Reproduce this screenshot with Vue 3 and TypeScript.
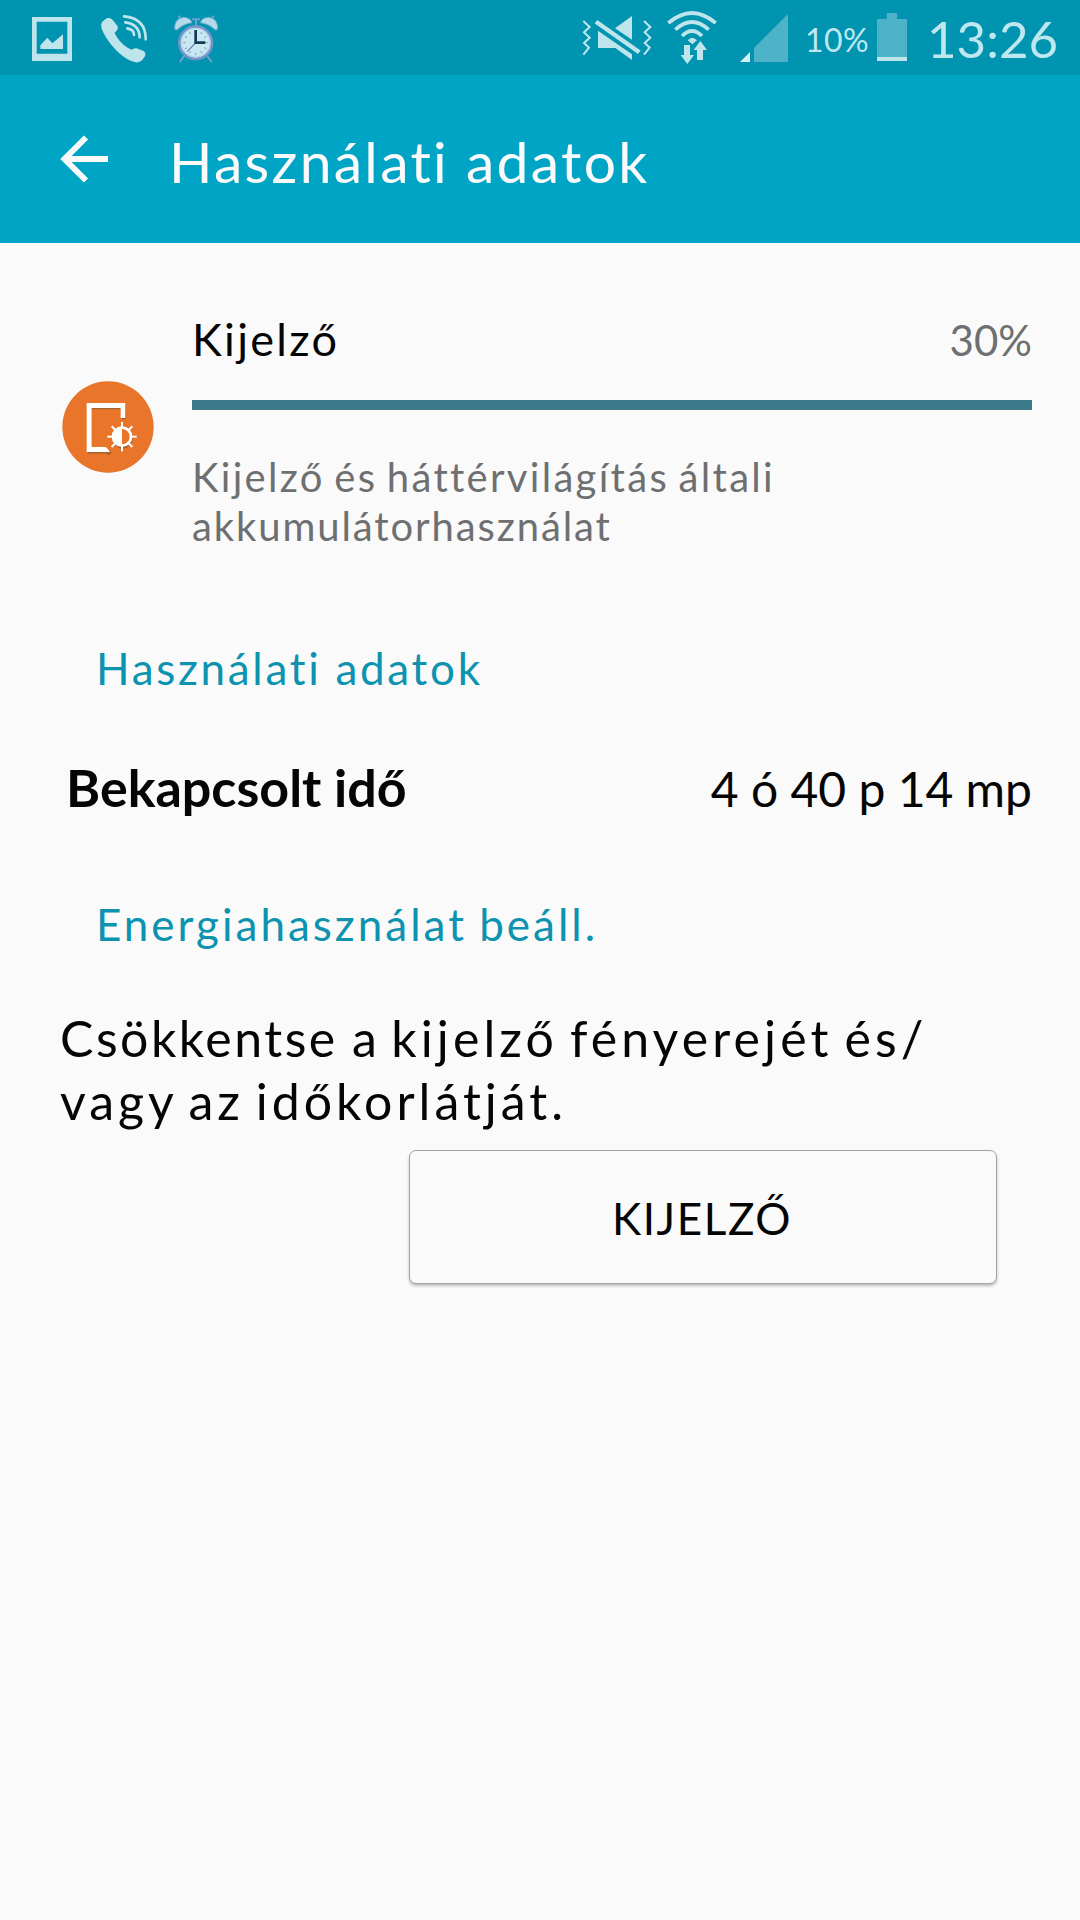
<script setup lang="ts">
interface Entry {
  label: string
  value: string
}

const title = 'Használati adatok'
const usage = { name: 'Kijelző', percent: '30%' }
const details: Entry[] = [{ label: 'Bekapcsolt idő', value: '4 ó 40 p 14 mp' }]
const ticks = Array.from({ length: 12 }, (_, i) => i * 30)
const rays = Array.from({ length: 8 }, (_, i) => i * 45)
</script>

<template>
  <div class="screen">
    <div class="status">
      <svg class="picture" viewBox="96 0 120 225" width="40" height="75">
        <path class="lit" fill-rule="evenodd" d="M96 51H216V183H96ZM110 65V161H202V65Z" />
        <path class="lit" d="M121 147V136L142 113L157 130L189 103V147Z" />
      </svg>
      <svg class="phone" viewBox="300 0 144 225" width="48" height="75">
        <path class="lit" d="M306 66L320 55Q331 51 338 60L352 77Q356 86 349 93L344 99Q355 125 384 144L395 149Q402 143 410 145L431 153Q439 159 435 169L426 181Q418 189 407 187Q382 182 353 155Q327 131 311 100Q299 79 306 66Z" />
        <g class="line" stroke-width="8" stroke-linecap="round">
          <path d="M372 49Q438 55 437 118" />
          <path d="M376 67Q418 72 419 112" />
          <path d="M382 85Q402 88 402 105" />
        </g>
      </svg>
      <svg class="alarm" viewBox="519 0 138 225" width="46" height="75">
        <g stroke="#6fa0cc" stroke-width="6" stroke-linecap="round">
          <path d="M551 170L541 184M623 170L634 184M588 60V74M579 58H597" />
          <path d="M537 49L542 58M640 49L635 58" />
        </g>
        <path fill="#b4daea" stroke="#6fa9d0" stroke-width="3" d="M524 88Q522 56 551 52Q571 53 576 68Q548 72 531 90Z" />
        <path fill="#b4daea" stroke="#6fa9d0" stroke-width="3" d="M653 88Q655 56 626 52Q606 53 601 68Q629 72 646 90Z" />
        <circle cx="587" cy="128" r="49" fill="#c8e7f1" stroke="#7394c9" stroke-width="8" />
        <circle cx="587" cy="128" r="43" fill="#c8e7f1" stroke="#aed4e8" stroke-width="3" />
        <path v-for="a in ticks" :key="a" d="M587 91V98" stroke="#6b98ba" stroke-width="2.5" :transform="`rotate(${a} 587 128)`" />
        <path d="M587 128L562 155" stroke="#6684bd" stroke-width="4" />
        <path d="M587 90V128H616" fill="none" stroke="#123a50" stroke-width="8" />
      </svg>
      <svg class="mute" viewBox="66 0 210 225" width="70" height="75">
        <g class="line" stroke-width="6">
          <path d="M70 63L89 81L72 97L89 113L72 129L87 143L70 164" />
          <path d="M252 63L271 81L254 97L271 113L254 129L269 143L252 164" />
          <path d="M108 65L238 157" stroke-width="13" />
        </g>
        <path class="lit" d="M165 85L216 48V119ZM114 92L216 163V180L166 144H114Z" />
      </svg>
      <svg class="wifi" viewBox="321 0 150 225" width="50" height="75">
        <g class="line" stroke-width="11">
          <path d="M325 69Q396 9 467 69" />
          <path d="M346 89Q396 43 446 89" />
          <path d="M366 108Q396 78 426 108" />
        </g>
        <path class="lit" d="M383 121Q397 106 411 121L397 133Z" />
        <path class="lit" d="M372 135H390V165H402L382 192L362 165H372ZM411 180V150H401L421 123L441 150H429V180Z" />
      </svg>
      <svg class="signal" viewBox="540 0 144 225" width="48" height="75">
        <path class="dim" d="M582 186V144L684 42V186Z" />
        <path fill="#d5f0f6" d="M540 186L570 156V186Z" />
      </svg>
      <span class="percent">10%</span>
      <svg class="battery" viewBox="231 0 90 225" width="30" height="75">
        <path class="dim" d="M260 39H291V57H321V171H231V57H260Z" />
        <path class="lit" d="M231 171H321V183H231Z" />
      </svg>
      <span class="time">13:26</span>
    </div>

    <header class="bar">
      <svg class="back" viewBox="0 0 48 48" width="48" height="48">
        <path d="M26 2.500L4.500 24L26 45.500M4 24H48" fill="none" stroke="#fafafa" stroke-width="6" />
      </svg>
      <h1>{{ title }}</h1>
    </header>

    <main>
      <section class="usage">
        <svg class="app" viewBox="67 240 276 276" width="92" height="92">
          <circle cx="205" cy="378" r="137" fill="#e87529" />
          <g fill="none" stroke="#a9602f" stroke-width="13" transform="translate(2 5)">
            <path d="M250 350V313H148V446H200L210 453" />
            <circle cx="247" cy="407" r="26" stroke-width="9" />
          </g>
          <path d="M257 351H243V321H156V438H198Q205 443 211 453H141V306H257Z" fill="#fff" />
          <circle cx="247" cy="407" r="27" fill="#e87529" stroke="#fff" stroke-width="8" />
          <path d="M247 380A27 27 0 0 0 247 434Z" fill="#fff" />
          <path v-for="a in rays" :key="a" d="M247 363V380" stroke="#fff" stroke-width="6" :transform="`rotate(${a} 247 407)`" />
        </svg>
        <div class="info">
          <div class="head">
            <span class="name">{{ usage.name }}</span>
            <span class="share">{{ usage.percent }}</span>
          </div>
          <div class="meter"></div>
          <p class="summary">Kijelző és háttérvilágítás általi<br /><span class="last">akkumulátorhasználat</span></p>
        </div>
      </section>

      <h2>Használati adatok</h2>
      <div v-for="d in details" :key="d.label" class="detail">
        <strong>{{ d.label }}</strong>
        <span>{{ d.value }}</span>
      </div>

      <h2 class="power">Energiahasználat beáll.</h2>
      <p class="hint"><span class="opening">Csökkentse a</span> kijelző fényerejét és/<br /><span class="last">vagy az időkorlátját.</span></p>
      <button type="button">KIJELZŐ</button>
    </main>
  </div>
</template>

<style>
body {
  background: #fafafa;
}
</style>

<style scoped>
.screen {
  width: 1080px;
  height: 1920px;
  overflow: hidden;
  background: #fafafa;
  color: #050505;
  font-family: "Choco Cooky", "Lato", sans-serif;
}
svg {
  display: block;
  flex: none;
}
h1,
h2,
p {
  margin: 0;
  font-weight: 400;
  white-space: nowrap;
}
.status {
  display: flex;
  height: 75px;
  padding-left: 32px;
  background: #0094b1;
  color: #bfe7f0;
  line-height: 75px;
}
.lit {
  fill: #bfe5ec;
}
.dim {
  fill: #4db3c9;
}
.line {
  fill: none;
  stroke: #bfe5ec;
}
.phone {
  margin-left: 28px;
}
.alarm {
  margin-left: 25px;
}
.mute {
  margin-left: 363px;
}
.wifi {
  margin-left: 15px;
}
.signal {
  margin-left: 23px;
}
.percent {
  width: 72px;
  margin-left: 17px;
  padding-top: 2px;
  font-size: 32px;
  letter-spacing: 0.5px;
}
.time {
  margin-left: 20px;
  padding-top: 1px;
  font-size: 51px;
}
.bar {
  display: flex;
  align-items: center;
  height: 168px;
  padding-left: 60px;
  background: #00a5c6;
  color: #fafafa;
}
h1 {
  margin-left: 61px;
  padding-top: 4px;
  font-size: 57px;
  line-height: 80px;
  letter-spacing: 2.3px;
}
main {
  padding-top: 66px;
}
.usage {
  display: flex;
  align-items: center;
  padding: 0 48px 0 62px;
}
.app {
  margin-bottom: 7px;
}
.info {
  flex: 1;
  margin-left: 38px;
}
.head {
  display: flex;
  justify-content: space-between;
  font-size: 45px;
  line-height: 60px;
}
.name {
  letter-spacing: 2.3px;
}
.share {
  padding-top: 1px;
  height: 59px;
  color: #6e6f70;
  font-size: 42px;
}
.meter {
  height: 10px;
  margin: 31px 0 43px;
  background: #3d7a89;
}
.summary {
  color: #6e6f70;
  font-size: 40px;
  line-height: 49px;
  letter-spacing: 2.3px;
  word-spacing: -3px;
}
.summary .last {
  letter-spacing: 1.9px;
}
h2 {
  margin: 87px 0 0 96px;
  color: #0d93b0;
  font-size: 44px;
  line-height: 60px;
  letter-spacing: 2.7px;
}
.detail {
  display: flex;
  align-items: baseline;
  justify-content: space-between;
  margin-top: 54px;
  padding: 0 48px 0 66px;
  font-size: 48px;
  line-height: 70px;
}
.detail strong {
  font-size: 52px;
  font-weight: 700;
}
.power {
  margin-top: 70px;
  letter-spacing: 3px;
  word-spacing: -2px;
}
.hint {
  margin: 53px 0 0 60px;
  font-size: 50px;
  line-height: 63px;
  letter-spacing: 4.1px;
  word-spacing: -5px;
}
.hint .opening {
  letter-spacing: 2.5px;
  word-spacing: -1px;
}
.hint .last {
  letter-spacing: 4px;
}
button {
  display: block;
  width: 588px;
  height: 134px;
  margin: 17px 0 0 409px;
  padding: 2px 2px 0 0;
  border: 1px solid #a3a3a3;
  border-radius: 7px;
  background: #fafafa;
  box-shadow: 0 2px 3px rgba(0, 0, 0, 0.25);
  color: #050505;
  font: inherit;
  font-size: 44px;
  letter-spacing: 1.6px;
}
</style>
